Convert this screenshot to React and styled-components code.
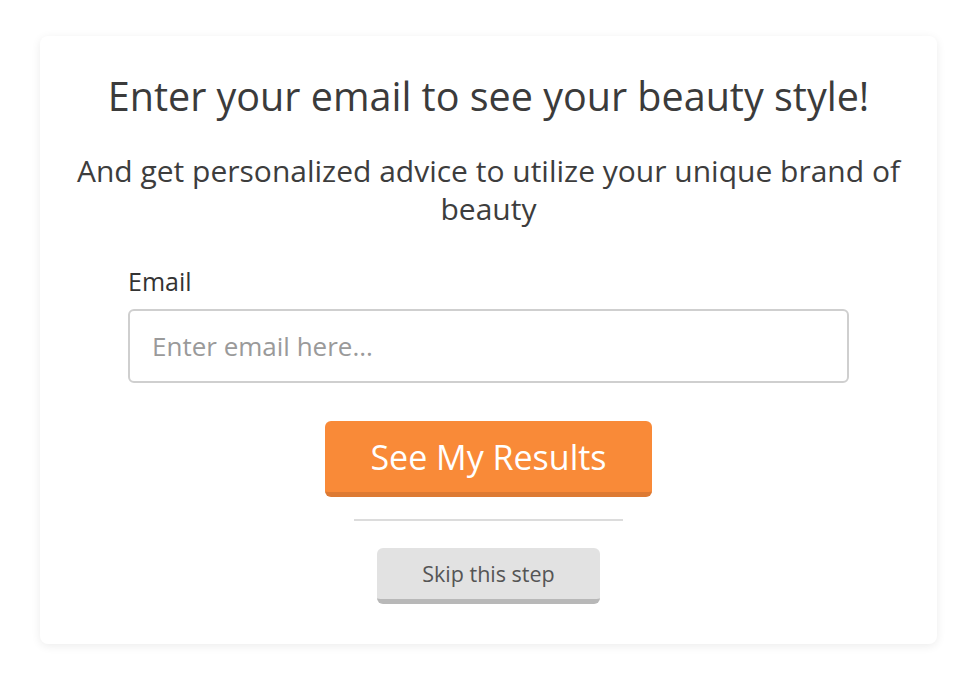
import React from "react";
import styled, { createGlobalStyle } from "styled-components";

const GlobalStyle = createGlobalStyle`
	body {
		margin: 0;
		background: #ffffff;
		font-family: "Open Sans", "Liberation Sans", sans-serif;
	}
`;

const App = () => {
	return (
		<Page>
			<GlobalStyle />
			<Card>
				<Title>Enter your email to see your beauty style!</Title>
				<Subtitle>
					And get personalized advice to utilize your unique brand of beauty
				</Subtitle>
				<Form>
					<Label htmlFor="email">Email</Label>
					<Input id="email" type="email" placeholder="Enter email here..." />
					<Actions>
						<PrimaryButton>See My Results</PrimaryButton>
						<Divider />
						<SkipButton>Skip this step</SkipButton>
					</Actions>
				</Form>
			</Card>
		</Page>
	);
};

const Page = styled.div`
	padding: 36px 38px 29px 40px;
`;

const Card = styled.section`
	background: #fff;
	border-radius: 8px;
	box-shadow: 0 2px 10px rgba(0, 0, 0, 0.08);
	padding: 36px 30px 40px;
	text-align: center;
	color: #3a3a3a;
`;

const Title = styled.h1`
	margin: 0 0 32px;
	font-size: 39.5px;
	font-weight: 400;
	line-height: 48px;
	color: #3b3b3b;
`;

const Subtitle = styled.p`
	margin: 0 auto 36px;
	font-size: 30px;
	line-height: 38px;
	color: #3d3d3d;
`;

const Form = styled.div`
	width: 721px;
	margin: 0 auto;
	text-align: left;
`;

const Label = styled.label`
	display: block;
	font-size: 25px;
	font-weight: 500;
	color: #333;
	margin-bottom: 11px;
`;

const Input = styled.input`
	box-sizing: border-box;
	display: block;
	width: 100%;
	height: 74px;
	border: 2px solid #cfcfcf;
	border-radius: 6px;
	padding: 0 22px;
	font-family: inherit;
	font-size: 26px;
	color: #333;
	outline: none;

	&::placeholder {
		color: #9a9a9a;
	}
`;

const Actions = styled.div`
	display: flex;
	flex-direction: column;
	align-items: center;
	margin-top: 38px;
`;

const PrimaryButton = styled.button`
	width: 327px;
	height: 76px;
	border: none;
	border-bottom: 5px solid #dd7a33;
	border-radius: 6px;
	background: #f98a38;
	color: #fff;
	font-family: inherit;
	font-size: 34px;
	padding: 0;
	cursor: pointer;
`;

const Divider = styled.hr`
	width: 269px;
	margin: 22px 0 27px;
	border: none;
	border-top: 2px solid #dcdcdc;
`;

const SkipButton = styled.button`
	width: 223px;
	height: 56px;
	border: none;
	border-bottom: 5px solid #b8b8b8;
	border-radius: 6px;
	background: #e2e2e2;
	color: #555;
	font-family: inherit;
	font-size: 21.5px;
	padding: 0;
	cursor: pointer;
`;

export default App;
